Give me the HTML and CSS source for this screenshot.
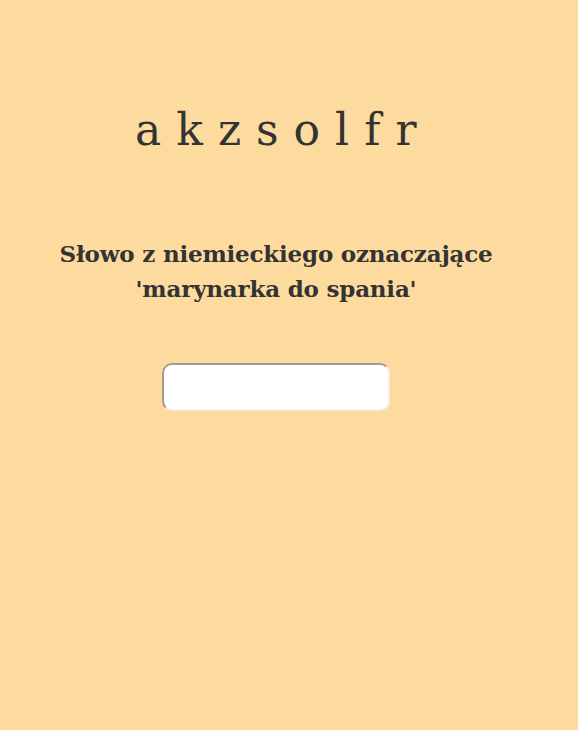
FILE: index.html
```html
<!DOCTYPE html>
<html lang="pl">
<head>
<meta charset="utf-8">
<link rel="stylesheet" href="styles.css">
</head>
<body>
<main class="page">
  <h1 class="letters">a k z s o l f r</h1>
  <h2 class="question">Słowo z niemieckiego oznaczające<br>'marynarka do spania'</h2>
  <input class="answer" type="text">
</main>
</body>
</html>
```
FILE: styles.css
```css
html, body {
  margin: 0;
  padding: 0;
  background: #fddb9f;
}
.page {
  width: 552px;
  min-height: 730px;
  display: flex;
  flex-direction: column;
  align-items: center;
  font-family: "DejaVu Serif", serif;
  color: #333;
}
.letters {
  margin: 100px 0 0;
  font-size: 44px;
  font-weight: 400;
  letter-spacing: 0.5px;
  line-height: 60px;
}
.question {
  margin: 76px 0 0;
  font-size: 23px;
  font-weight: 600;
  letter-spacing: -0.2px;
  text-align: center;
  line-height: 35px;
}
.answer {
  margin-top: 57px;
  width: 228px;
  height: 48px;
  box-sizing: border-box;
  border-style: solid;
  border-width: 2px;
  border-color: #a39a8a #f4eee6 #f4eee6 #a39a8a;
  border-radius: 10px;
  background: #fff;
}
```
